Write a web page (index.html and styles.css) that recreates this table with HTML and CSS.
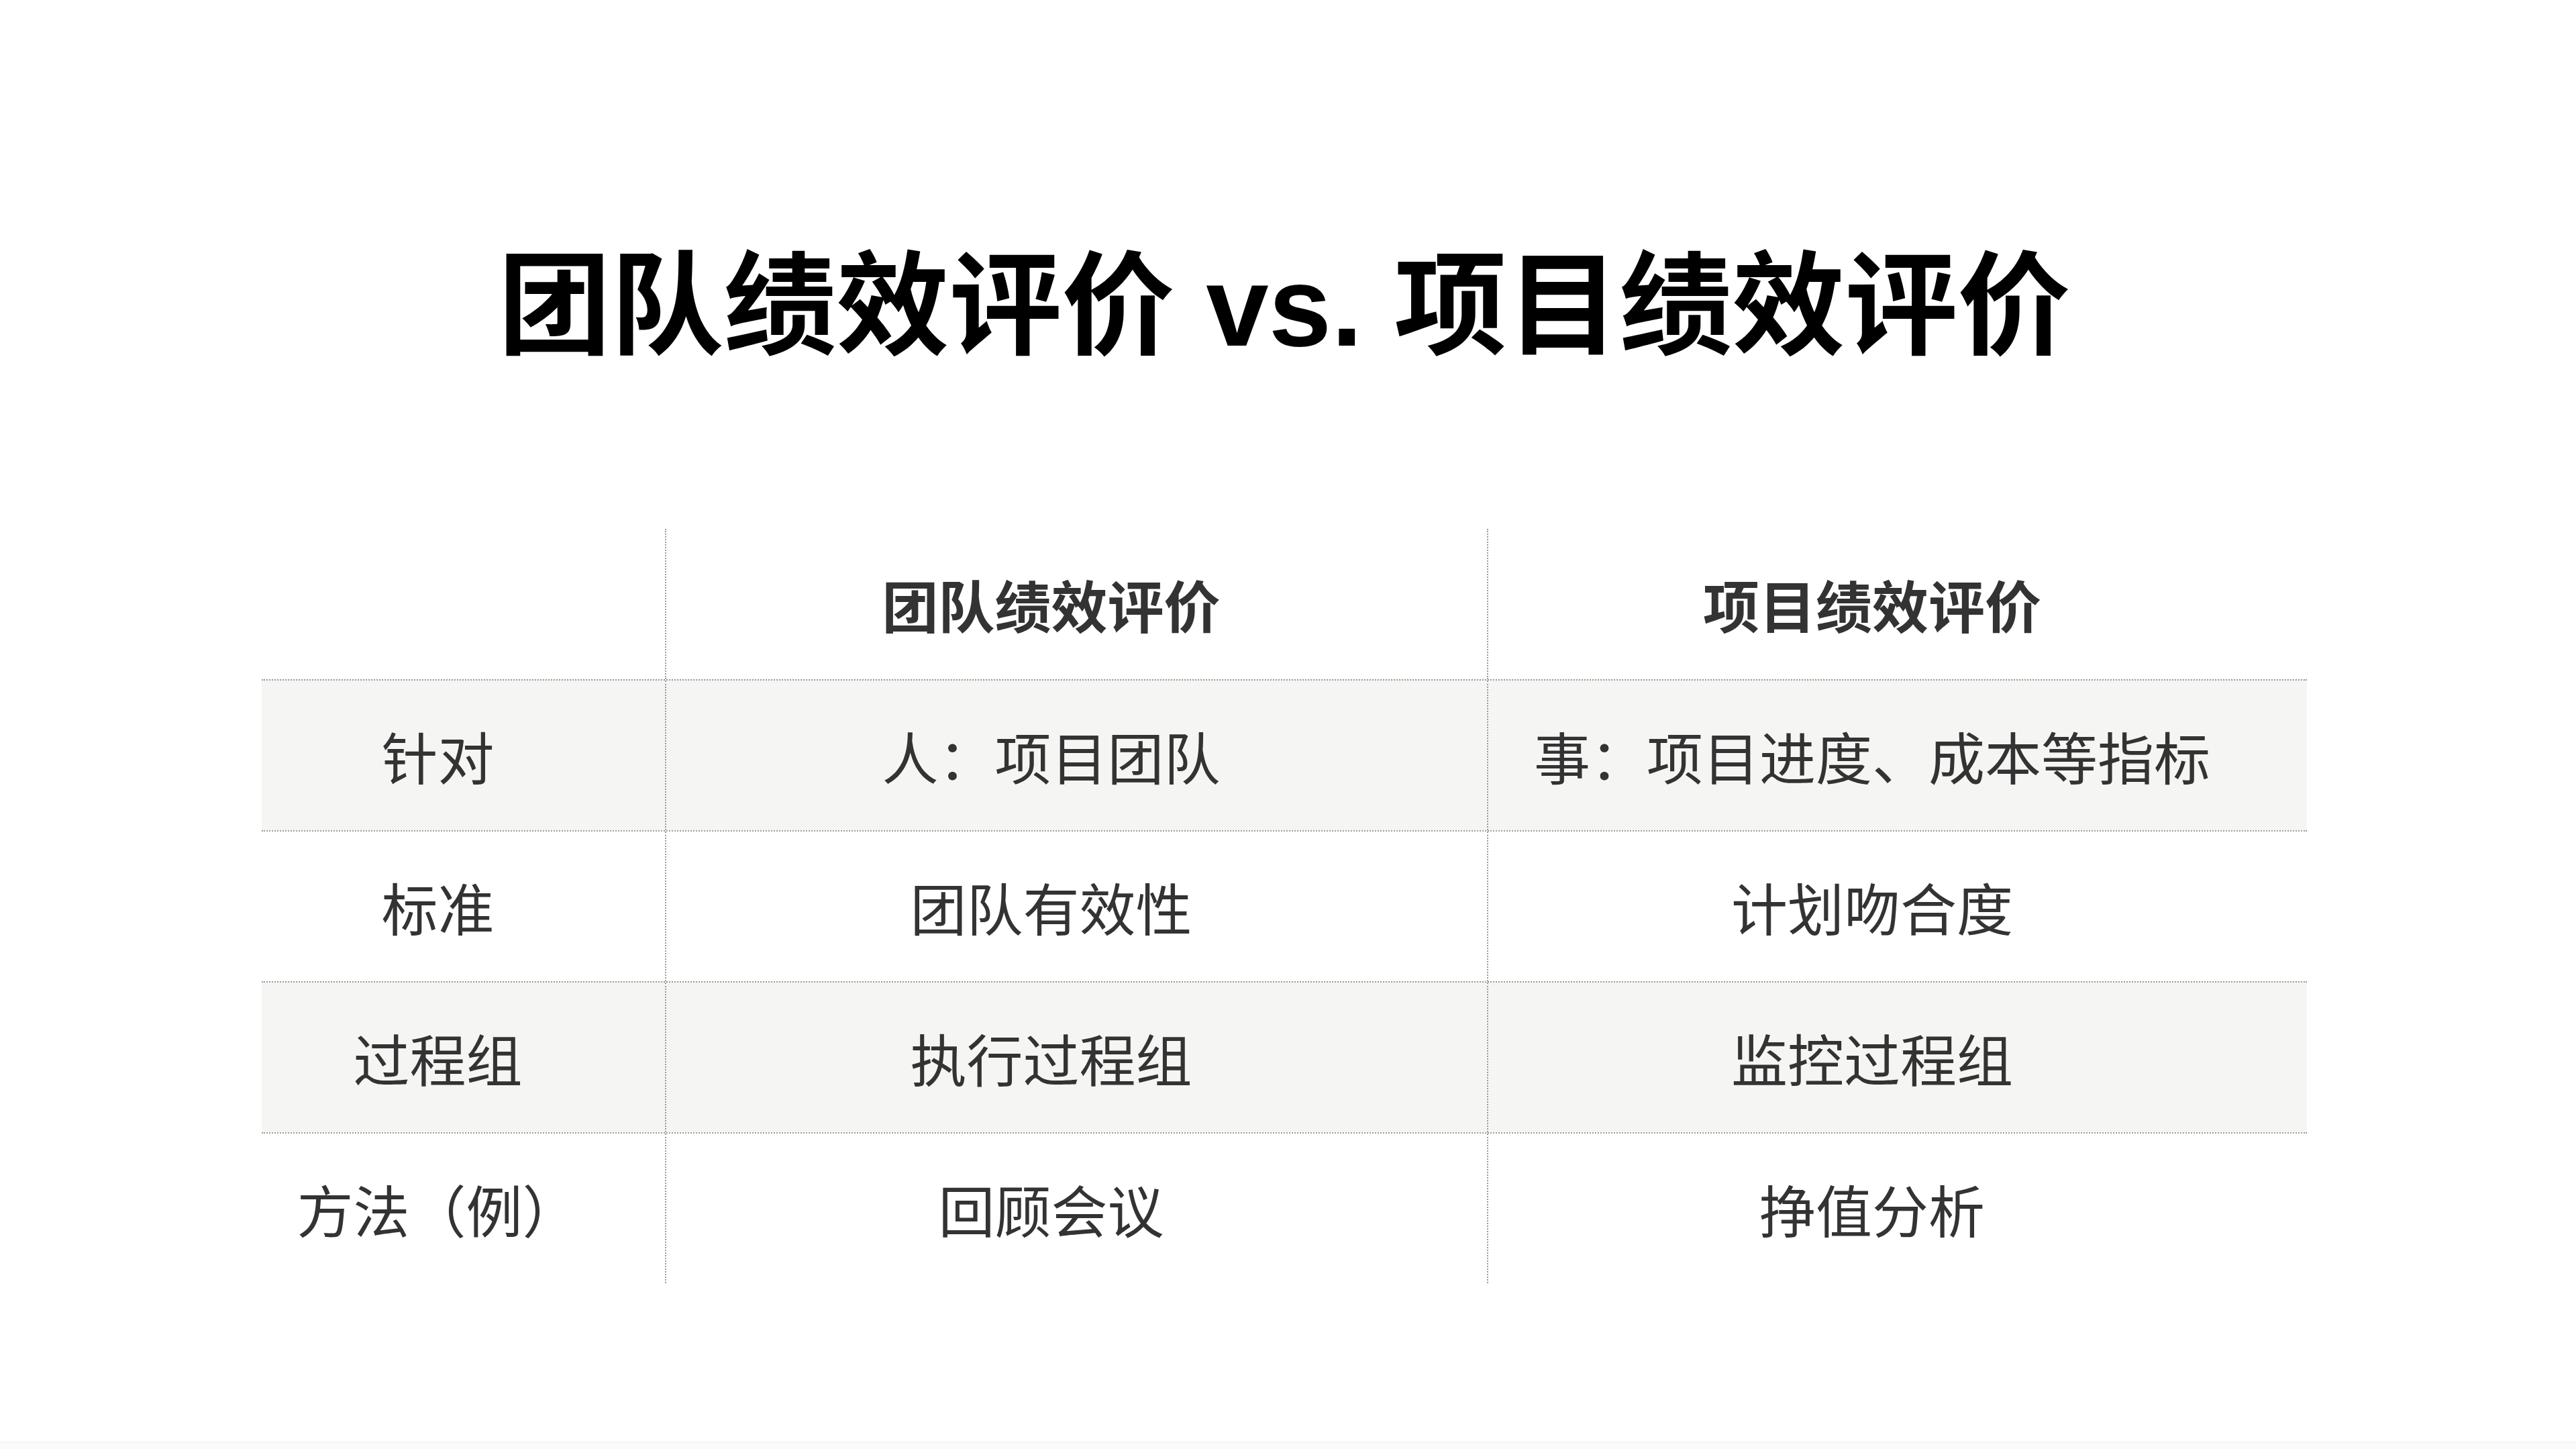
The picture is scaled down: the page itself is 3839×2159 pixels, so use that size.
FILE: index.html
```html
<!DOCTYPE html>
<html lang="zh-CN">
<head>
<meta charset="utf-8">
<title>团队绩效评价 vs. 项目绩效评价</title>
<link rel="stylesheet" href="styles.css">
</head>
<body>
<main class="slide">
  <h1 class="title">团队绩效评价 vs. 项目绩效评价</h1>
  <div class="table">
    <div class="row head">
      <div class="cell"></div>
      <div class="cell">团队绩效评价</div>
      <div class="cell">项目绩效评价</div>
    </div>
    <div class="row shade">
      <div class="cell">针对</div>
      <div class="cell">人：项目团队</div>
      <div class="cell">事：项目进度、成本等指标</div>
    </div>
    <div class="row">
      <div class="cell">标准</div>
      <div class="cell">团队有效性</div>
      <div class="cell">计划吻合度</div>
    </div>
    <div class="row shade">
      <div class="cell">过程组</div>
      <div class="cell">执行过程组</div>
      <div class="cell">监控过程组</div>
    </div>
    <div class="row">
      <div class="cell">方法（例）</div>
      <div class="cell">回顾会议</div>
      <div class="cell">挣值分析</div>
    </div>
  </div>
</main>
<footer class="bottom-bar"></footer>
</body>
</html>
```
FILE: styles.css
```css
html, body {
  margin: 0;
  padding: 0;
  background: #ffffff;
}

body {
  min-height: 2159px;
  display: flex;
  flex-direction: column;
  font-family: "Noto Sans CJK SC", "Noto Sans", sans-serif;
  color: #333333;
}

.slide {
  display: flex;
  flex-direction: column;
  align-items: center;
  padding-right: 11px;
}

.title {
  margin: 373px 0 0 0;
  font-family: "Liberation Sans", "Noto Sans CJK SC", sans-serif;
  font-weight: 700;
  font-size: 168px;
  line-height: 1;
  color: #000000;
  letter-spacing: 0;
}

.table {
  margin-top: 247px;
  width: 3048px;
  display: flex;
  flex-direction: column;
}

.row {
  display: grid;
  grid-template-columns: 601px 1225px 1222px;
  height: 225px;
  border-top: 2px dotted #9a9a9a;
  box-sizing: border-box;
}

.row.head {
  height: 224px;
  border-top: none;
  font-weight: 700;
}

.row.shade {
  background: #f5f5f3;
}

.cell {
  display: flex;
  align-items: center;
  justify-content: center;
  padding-right: 76px;
  font-size: 84px;
  line-height: 1;
  color: #333333;
}

.cell + .cell {
  border-left: 2px dotted #9a9a9a;
}

.bottom-bar {
  margin-top: auto;
  height: 10px;
  background: #fafafa;
  border-top: 1px solid #efefef;
}
```
